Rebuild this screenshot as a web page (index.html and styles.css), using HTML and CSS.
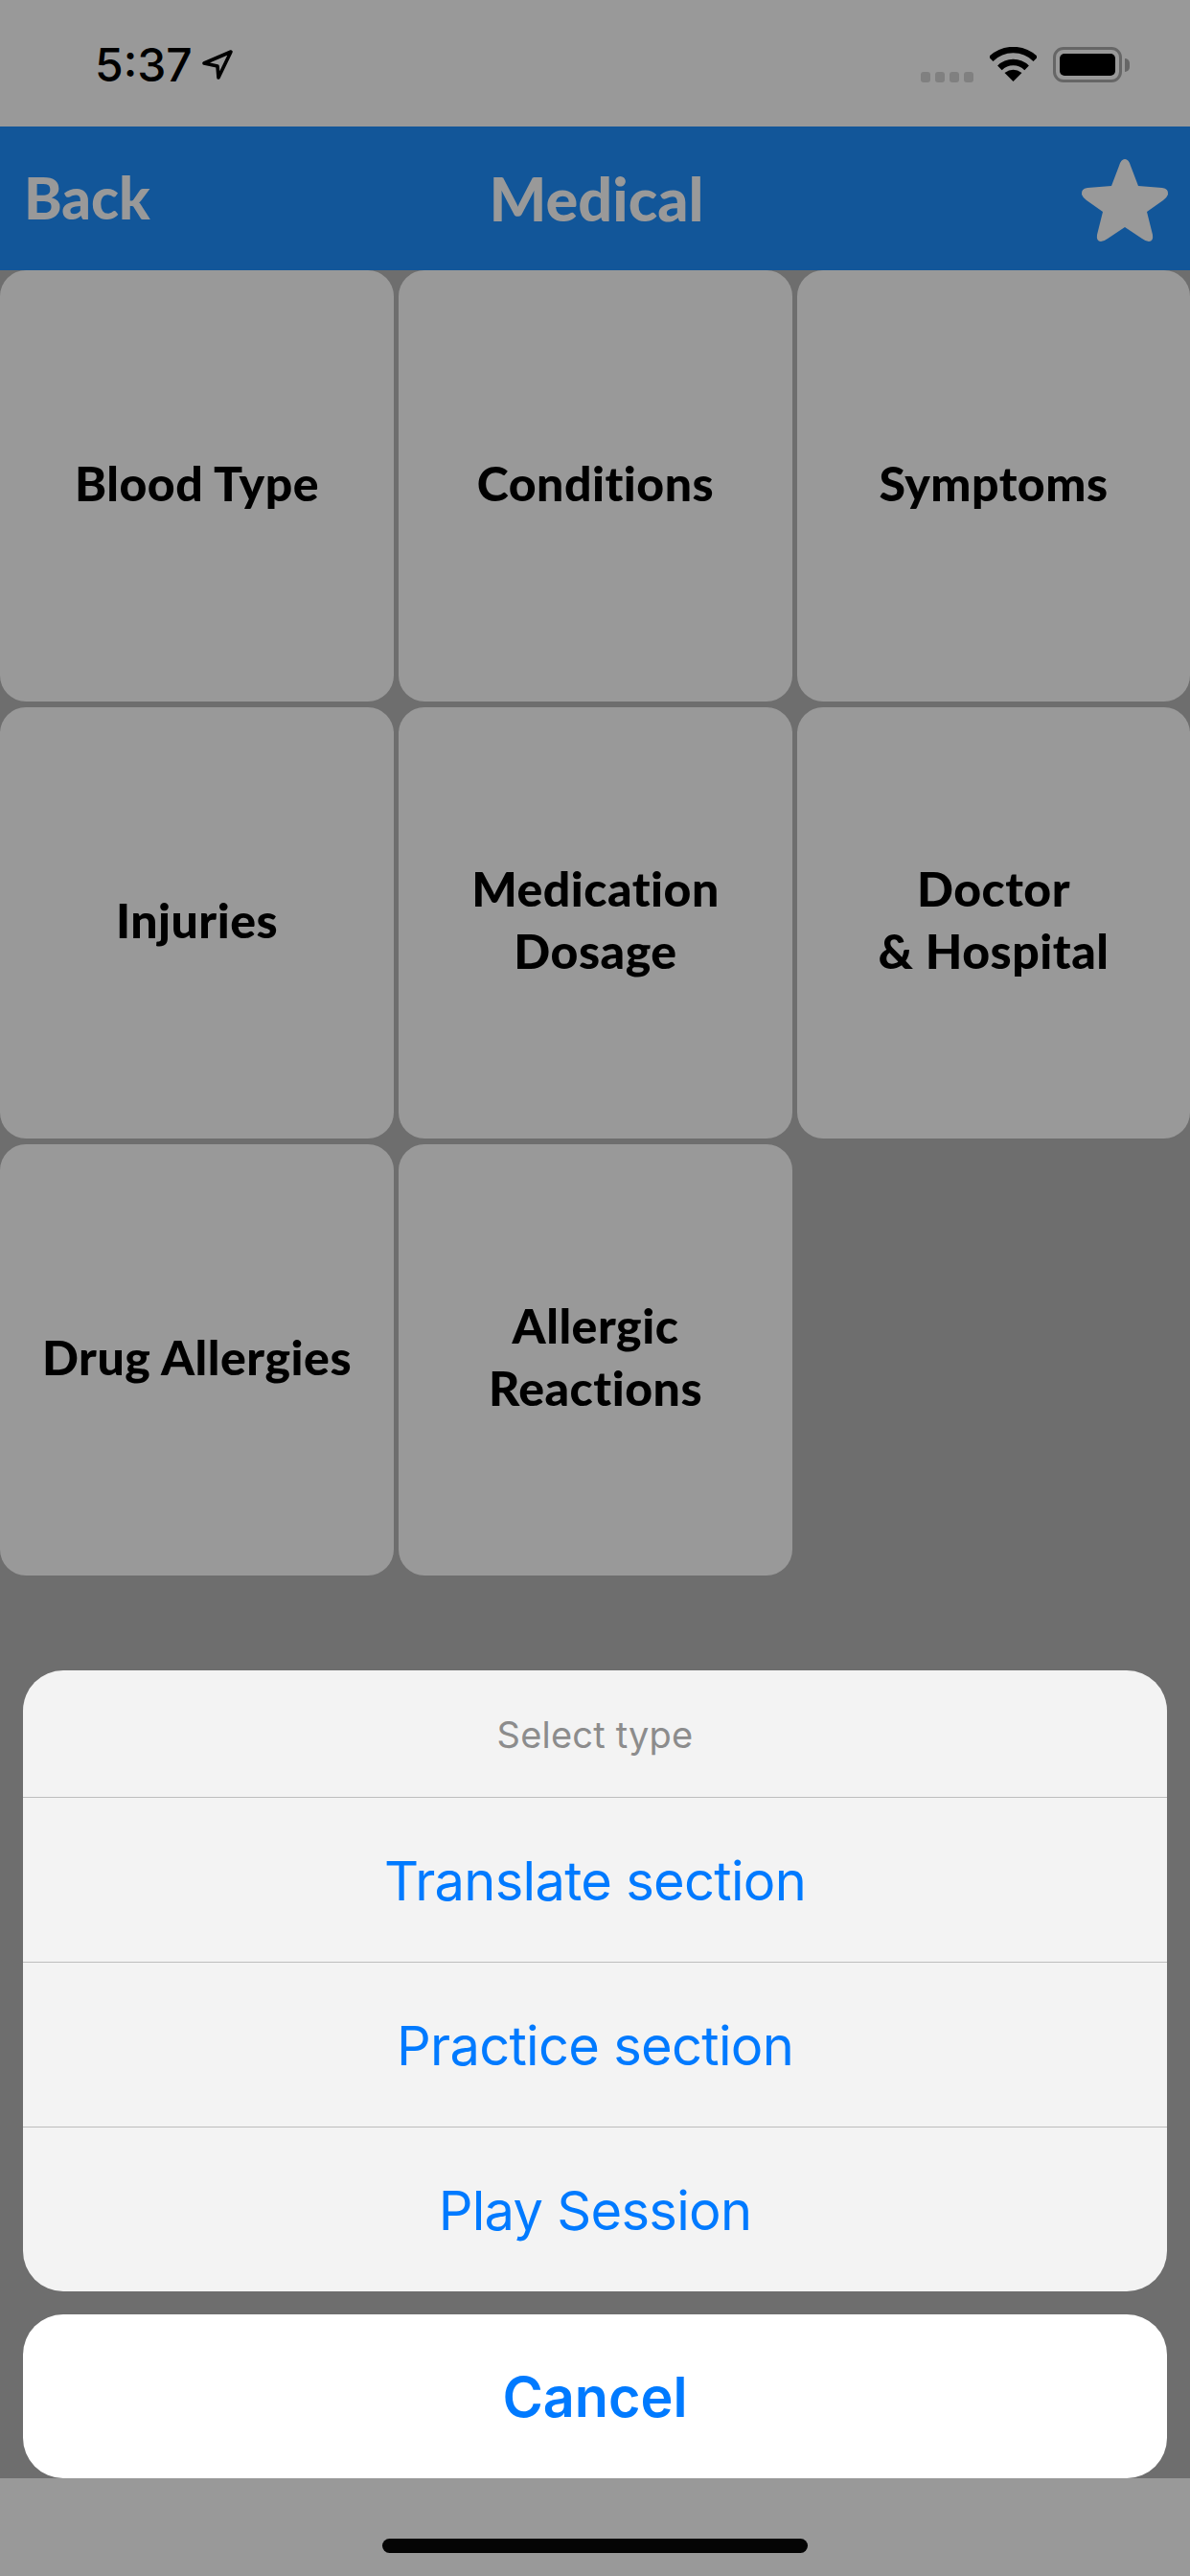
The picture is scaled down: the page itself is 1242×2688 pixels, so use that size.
FILE: index.html
```html
<!DOCTYPE html>
<html>
	<head>
		<title>Medical</title>
		<meta charset="utf-8" />
		<link rel="stylesheet" href="styles.css">
	</head>
	<body>
		<div id="phone">
			<div id="status">
				<div class="clock">
					<span class="time">5:37</span>
					<svg class="arrow" width="34" height="33" viewBox="0 0 34 33"><path d="M31 3 L3 15 L17 18 L18 30 Z" /></svg>
				</div>
				<div class="indicators">
					<div class="signal"><i></i><i></i><i></i><i></i></div>
					<svg class="wifi" width="49" height="36" viewBox="0 0 49 36">
						<path class="band" d="M1.2 12.7 A33 33 0 0 1 47.8 12.7" />
						<path class="band" d="M10.4 21.9 A20 20 0 0 1 38.6 21.9" />
						<path d="M24.5 36 L15.5 27 Q24.5 20.5 33.5 27 Z" />
					</svg>
					<div class="battery"><div class="charge"></div></div>
					<div class="nub"></div>
				</div>
			</div>

			<div id="nav">
				<div class="back">Back</div>
				<div class="title">Medical</div>
				<svg class="star" width="92" height="87" viewBox="-1 0 92 87">
					<path d="M45 0 Q49 0 51 7 L59 28 L84 30 Q91 31 90 37 Q89 40 85 43 L68 55 L74 79 Q75 86 70 86 Q67 86 63 83 L45 71 L27 83 Q23 86 20 86 Q15 86 16 79 L22 55 L5 43 Q1 40 0 37 Q-1 31 6 30 L31 28 L39 7 Q41 0 45 0 Z" />
				</svg>
			</div>

			<div id="tiles">
				<div class="tile">Blood Type</div>
				<div class="tile">Conditions</div>
				<div class="tile">Symptoms</div>
				<div class="tile">Injuries</div>
				<div class="tile">Medication<br>Dosage</div>
				<div class="tile">Doctor<br>&amp; Hospital</div>
				<div class="tile">Drug Allergies</div>
				<div class="tile">Allergic<br>Reactions</div>
			</div>

			<div id="home"><div class="home-bar"></div></div>

			<div id="sheet">
				<div class="options">
					<div class="sheet-title">Select type</div>
					<div class="option">Translate section</div>
					<div class="option">Practice section</div>
					<div class="option">Play Session</div>
				</div>
				<div class="cancel">Cancel</div>
			</div>
		</div>
	</body>
</html>
```

FILE: styles.css
```css
* { box-sizing: border-box; }
body { margin: 0; background: #6e6e6e; }

#phone {
	position: relative;
	width: 1242px; height: 2688px;
	display: flex; flex-direction: column;
	background: #6e6e6e;
	overflow: hidden;
}

/* status bar */
#status {
	height: 132px;
	padding: 49px 63px 0 99px;
	display: flex; justify-content: space-between; align-items: flex-start;
	background: #999999;
}
.clock { display: flex; align-items: center; height: 37px; }
.time {
	font-family: Inter, sans-serif;
	font-size: 48px; font-weight: 500; line-height: 37px;
	color: #000;
}
.arrow { margin-left: 9px; }
.arrow path { fill: none; stroke: #000; stroke-width: 3.6; stroke-linejoin: round; }
.indicators { display: flex; align-items: flex-start; }
.signal { display: flex; gap: 5px; margin-top: 26px; margin-right: 17px; }
.signal i { display: block; width: 10px; height: 11px; border-radius: 3px; background: #808080; }
.wifi path { fill: #000; }
.wifi .band { fill: none; stroke: #000; stroke-width: 6.5; }
.battery {
	width: 72px; height: 37px;
	margin-left: 17px; padding: 4px;
	border: 3px solid #666666; border-radius: 11px;
}
.charge { height: 100%; border-radius: 5px; background: #000; }
.nub {
	width: 5px; height: 14px;
	margin: 12px 0 0 3px;
	border-radius: 0 5px 5px 0;
	background: #666666;
}

/* nav */
#nav {
	height: 150px;
	padding: 0 22px 2px 25px;
	display: grid; grid-template-columns: 1fr auto 1fr; align-items: center;
	background: #125699;
	font-family: Lato, sans-serif;
	font-size: 60px; font-weight: 900;
	color: #999999;
}
.title { font-size: 63px; }
.star { justify-self: end; margin-top: 6px; }
.star path { fill: #999999; }

/* tiles */
#tiles {
	display: grid;
	grid-template-columns: 411px 411px 410px;
	grid-auto-rows: 450px;
	gap: 6px 5px;
	flex: 1;
	align-content: start;
}
.tile {
	display: flex; align-items: center; justify-content: center;
	padding-bottom: 6px;
	border-radius: 27px;
	background: #999999;
	font-family: Lato, sans-serif;
	font-size: 50px; font-weight: 900; line-height: 65px;
	letter-spacing: 0.5px;
	text-align: center;
	color: #000;
}

/* home indicator */
#home {
	height: 102px;
	padding-top: 63px;
	background: #999999;
}
.home-bar {
	width: 444px; height: 15px;
	margin: 0 auto;
	border-radius: 8px;
	background: #050505;
}

/* action sheet */
#sheet {
	position: absolute;
	left: 24px; right: 24px; bottom: 102px;
	font-family: Inter, sans-serif;
	text-align: center;
}
.options {
	border-radius: 42px;
	background: #f3f3f3;
	overflow: hidden;
}
.sheet-title {
	height: 132px;
	font-size: 38px; line-height: 134px;
	letter-spacing: 0.2px;
	color: #8c8c8c;
}
.option {
	height: 172px;
	border-top: 1px solid #bdbdbd;
	font-size: 56px; line-height: 174px;
	letter-spacing: -0.7px;
	color: #007aff;
}
.cancel {
	height: 171px;
	margin-top: 24px;
	border-radius: 42px;
	background: #fff;
	font-size: 57.5px; font-weight: 600; line-height: 173px;
	color: #007aff;
}
```
